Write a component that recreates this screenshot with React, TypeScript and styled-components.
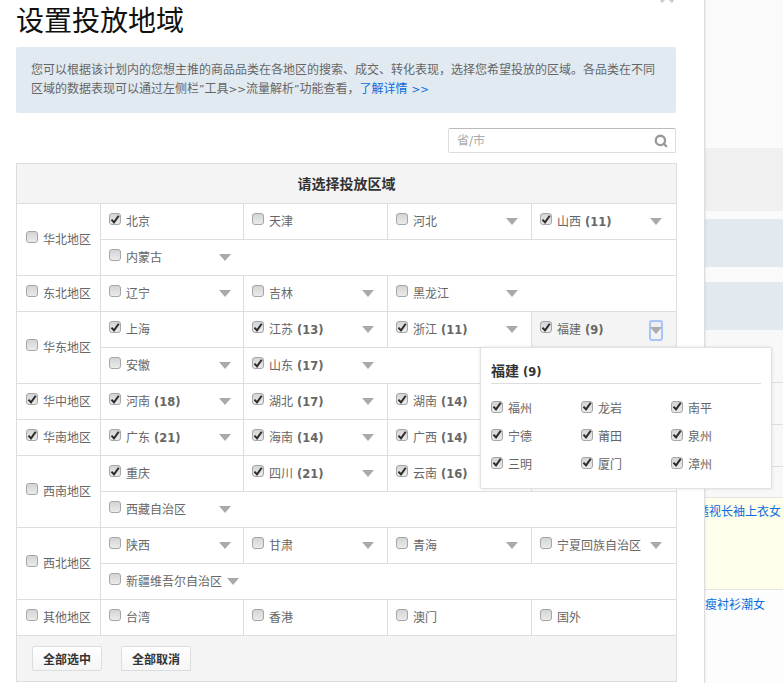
import React from "react";
import styled, { createGlobalStyle } from "styled-components";
import { Search } from "lucide-react";

const Global = createGlobalStyle`
  html, body { margin: 0; padding: 0; height: 683px; overflow: hidden; background: #fff; }
  body { font-family: "DejaVu Sans", "Noto Sans CJK SC", sans-serif; font-size: 12px; color: #666; }
  * { box-sizing: border-box; }
`;

const Page = styled.div`
  display: flex;
  width: 783px;
  height: 683px;
  overflow: hidden;
`;

const Modal = styled.main`
  position: relative;
  z-index: 1;
  flex: none;
  width: 705px;
  height: 683px;
  padding: 0 28px 0 16px;
  background: #fff;
  border-right: 1px solid #ddd;
  box-shadow: 1px 0 2px rgba(0, 0, 0, 0.06);
`;

const CloseIcon = styled.svg`
  position: absolute;
  top: -11px;
  left: 660px;
  width: 14px;
  height: 14px;
`;

const Title = styled.h1`
  margin: 0;
  height: 47px;
  font-family: "Noto Sans CJK SC", sans-serif;
  font-size: 28px;
  font-weight: 400;
  line-height: 39px;
  color: #111;
`;

const Notice = styled.div`
  height: 66px;
  margin-bottom: 15px;
  padding: 14px 15px;
  border-radius: 2px;
  background: #e2eaf1;
  line-height: 19px;
  color: #666;
  white-space: nowrap;
`;

const Latin = styled.span`
  font-size: 10.5px;
`;

const MoreLink = styled.a`
  color: #0a6cde;
  text-decoration: none;
`;

const SearchRow = styled.div`
  display: flex;
  justify-content: flex-end;
  margin-bottom: 10px;
`;

const SearchBox = styled.div`
  position: relative;
  width: 228px;
  height: 25px;
`;

const SearchInput = styled.input`
  display: block;
  width: 100%;
  height: 100%;
  padding: 0 28px 0 8px;
  border: 1px solid #ddd;
  border-top-color: #bbb;
  border-radius: 2px;
  background: #fff;
  font: inherit;
  &::placeholder { color: #aaa; opacity: 1; }
`;

const SearchGlyph = styled.span`
  position: absolute;
  top: 6px;
  right: 8px;
  display: flex;
  color: #999;
`;

const Table = styled.table`
  width: 660px;
  table-layout: fixed;
  border-collapse: collapse;
`;

const HeadCell = styled.th`
  height: 40px;
  padding: 0 0 2px;
  border: 1px solid #ddd;
  background: #f4f4f4;
  font-family: "Noto Sans CJK SC", sans-serif;
  font-size: 14px;
  font-weight: 700;
  color: #333;
`;

const RegionCell = styled.td`
  padding: 0 0 0 9px;
  border: 1px solid #ddd;
  white-space: nowrap;
`;

const Cell = styled.td<{ $active?: boolean }>`
  position: relative;
  height: 36px;
  padding: 0 0 0 8px;
  border: 1px solid #ddd;
  background: ${(p) => (p.$active ? "#f4f4f4" : "#fff")};
`;

const Item = styled.div<{ $wide?: boolean }>`
  display: inline-flex;
  align-items: center;
  min-width: ${(p) => (p.$wide ? "122px" : "0")};
  height: 34px;
  vertical-align: top;
`;

const CheckBox = styled.span`
  flex: none;
  display: flex;
  align-items: center;
  justify-content: center;
  width: 12px;
  height: 12px;
  margin: -5px 5px 0 0;
  border: 1px solid #a6a6a6;
  border-radius: 3px;
  background: linear-gradient(#d4d4d4, #ebebeb);
`;

const Name = styled.span`
  white-space: nowrap;
  line-height: 16px;
`;

const Count = styled.b`
  font-size: 11.5px;
  font-weight: 700;
`;

const Arrow = styled.span`
  flex: none;
  width: 0;
  height: 0;
  border-left: 6px solid transparent;
  border-right: 6px solid transparent;
  border-top: 7px solid #aaa;
`;

const ArrowSlot = styled.span`
  flex: none;
  display: flex;
  margin-left: auto;
  padding-left: 5px;
`;

const ActiveArrow = styled.span`
  position: absolute;
  top: 8px;
  left: 117px;
  display: flex;
  align-items: center;
  justify-content: center;
  width: 14px;
  height: 21px;
  border: 2px solid #a8c4f8;
  border-radius: 3px;
  background: linear-gradient(#eee, #f4f4f4);
`;

const FootCell = styled.td`
  height: 46px;
  padding: 0 0 0 15px;
  border: 1px solid #ddd;
  background: #f4f4f4;
`;

const FootButtons = styled.div`
  display: flex;
  gap: 19px;
`;

const FootButton = styled.button`
  width: 70px;
  height: 25px;
  padding: 0;
  border: 1px solid #ddd;
  border-radius: 2px;
  background: linear-gradient(#fff, #f5f5f5);
  font-family: "Noto Sans CJK SC", sans-serif;
  font-size: 12px;
  font-weight: 700;
  color: #333;
`;

const Popover = styled.div`
  position: absolute;
  z-index: 5;
  top: 35px;
  left: -52px;
  width: 292px;
  height: 142px;
  padding: 0 10px;
  border: 1px solid #e2e2e2;
  border-radius: 2px;
  background: #fff;
  box-shadow: 0 0 3px rgba(0, 0, 0, 0.12);
`;

const PopoverTitle = styled.div`
  height: 36px;
  border-bottom: 1px solid #ddd;
  font-size: 14px;
  font-weight: 700;
  line-height: 47px;
  white-space: nowrap;
  color: #333;
`;

const PopoverGrid = styled.div`
  display: grid;
  grid-template-columns: repeat(3, 90px);
  grid-auto-rows: 28px;
  padding-top: 11px;
`;

const PopoverItem = styled.div`
  display: flex;
  align-items: center;
`;

const Backdrop = styled.aside`
  flex: 1;
  min-width: 0;
  display: flex;
  flex-direction: column;
  background: #fafafa;
`;

const Band = styled.div<{ $h: number; $bg: string; $line?: boolean }>`
  flex: none;
  height: ${(p) => p.$h}px;
  background: ${(p) => p.$bg};
  border-top: ${(p) => (p.$line ? "1px solid #ddd" : "none")};
`;

const Cream = styled.div`
  flex: none;
  height: 93px;
  padding-top: 5px;
  border-top: 1px solid #e4e4e4;
  border-bottom: 1px solid #e4e4e4;
  background: #ffffeb;
`;

const Rest = styled.div`
  flex: 1;
  padding-top: 6px;
  background: #fdfdfd;
`;

const ProductLink = styled.a<{ $shift?: number }>`
  display: block;
  margin-left: ${(p) => p.$shift ?? 0}px;
  color: #0a6cde;
  line-height: 18px;
  white-space: nowrap;
`;

type Prov = { n: string; c?: boolean; k?: number; a?: boolean; span?: number; active?: boolean; empty?: boolean };
type Region = { name: string; c?: boolean; rows: Prov[][] };

const regions: Region[] = [
  { name: "华北地区", rows: [
    [{ n: "北京", c: true }, { n: "天津" }, { n: "河北", a: true }, { n: "山西", c: true, k: 11, a: true }],
    [{ n: "内蒙古", a: true, span: 4 }],
  ] },
  { name: "东北地区", rows: [
    [{ n: "辽宁", a: true }, { n: "吉林", a: true }, { n: "黑龙江", a: true, span: 2 }],
  ] },
  { name: "华东地区", rows: [
    [{ n: "上海", c: true }, { n: "江苏", c: true, k: 13, a: true }, { n: "浙江", c: true, k: 11, a: true }, { n: "福建", c: true, k: 9, active: true }],
    [{ n: "安徽", a: true }, { n: "山东", c: true, k: 17, a: true, span: 3 }],
  ] },
  { name: "华中地区", c: true, rows: [
    [{ n: "河南", c: true, k: 18, a: true }, { n: "湖北", c: true, k: 17, a: true }, { n: "湖南", c: true, k: 14, a: true }, { n: "", empty: true }],
  ] },
  { name: "华南地区", c: true, rows: [
    [{ n: "广东", c: true, k: 21, a: true }, { n: "海南", c: true, k: 14, a: true }, { n: "广西", c: true, k: 14, a: true }, { n: "", empty: true }],
  ] },
  { name: "西南地区", rows: [
    [{ n: "重庆", c: true }, { n: "四川", c: true, k: 21, a: true }, { n: "云南", c: true, k: 16, a: true }, { n: "", empty: true }],
    [{ n: "西藏自治区", a: true, span: 4 }],
  ] },
  { name: "西北地区", rows: [
    [{ n: "陕西", a: true }, { n: "甘肃", a: true }, { n: "青海", a: true }, { n: "宁夏回族自治区", a: true }],
    [{ n: "新疆维吾尔自治区", a: true, span: 4 }],
  ] },
  { name: "其他地区", rows: [
    [{ n: "台湾" }, { n: "香港" }, { n: "澳门" }, { n: "国外" }],
  ] },
];

const fujian = ["福州", "龙岩", "南平", "宁德", "莆田", "泉州", "三明", "厦门", "漳州"];

const Check = ({ on }: { on?: boolean }) => (
  <CheckBox>
    {on && (
      <svg width="11" height="11" viewBox="0 0 11 11">
        <path d="M1.6 5.6 L4.4 8.6 L9.6 1.4" fill="none" stroke="#2c2c2c" strokeWidth="2.2" />
      </svg>
    )}
  </CheckBox>
);

const ProvCell = ({ p }: { p: Prov }) => {
  if (p.empty) return <Cell />;
  return (
    <Cell colSpan={p.span} $active={p.active}>
      <Item $wide={p.a}>
        <Check on={p.c} />
        <Name>
          {p.n}
          {p.k !== undefined && <Count> ({p.k})</Count>}
        </Name>
        {p.a && (
          <ArrowSlot>
            <Arrow />
          </ArrowSlot>
        )}
      </Item>
      {p.active && (
        <>
          <ActiveArrow>
            <Arrow />
          </ActiveArrow>
          <Popover>
            <PopoverTitle>福建<Count> (9)</Count></PopoverTitle>
            <PopoverGrid>
              {fujian.map((c) => (
                <PopoverItem key={c}>
                  <Check on />
                  <Name>{c}</Name>
                </PopoverItem>
              ))}
            </PopoverGrid>
          </Popover>
        </>
      )}
    </Cell>
  );
};

export default function App() {
  return (
    <Page>
      <Global />
      <Modal>
        <CloseIcon viewBox="0 0 14 14">
          <path d="M1 1 L13 13 M13 1 L1 13" stroke="#ccc" strokeWidth="3" />
        </CloseIcon>
        <Title>设置投放地域</Title>
        <Notice>
          您可以根据该计划内的您想主推的商品品类在各地区的搜索、成交、转化表现，选择您希望投放的区域。各品类在不同
          <br />
          区域的数据表现可以通过左侧栏<Latin>”</Latin>工具<Latin>&gt;&gt;</Latin>流量解析<Latin>”</Latin>功能查看，
          <MoreLink href="#">了解详情 <Latin>&gt;&gt;</Latin></MoreLink>
        </Notice>
        <SearchRow>
          <SearchBox>
            <SearchInput placeholder="省/市" />
            <SearchGlyph>
              <Search size={14} strokeWidth={4} />
            </SearchGlyph>
          </SearchBox>
        </SearchRow>
        <Table>
          <colgroup>
            <col width={84} />
            <col width={143} />
            <col width={144} />
            <col width={144} />
            <col width={145} />
          </colgroup>
          <thead>
            <tr>
              <HeadCell colSpan={5}>请选择投放区域</HeadCell>
            </tr>
          </thead>
          <tbody>
            {regions.map((r) =>
              r.rows.map((row, i) => (
                <tr key={r.name + i}>
                  {i === 0 && (
                    <RegionCell rowSpan={r.rows.length}>
                      <Item>
                        <Check on={r.c} />
                        <Name>{r.name}</Name>
                      </Item>
                    </RegionCell>
                  )}
                  {row.map((p, j) => (
                    <ProvCell key={j} p={p} />
                  ))}
                </tr>
              ))
            )}
          </tbody>
          <tfoot>
            <tr>
              <FootCell colSpan={5}>
                <FootButtons>
                  <FootButton>全部选中</FootButton>
                  <FootButton>全部取消</FootButton>
                </FootButtons>
              </FootCell>
            </tr>
          </tfoot>
        </Table>
      </Modal>
      <Backdrop>
        <Band $h={148} $bg="#fafafa" />
        <Band $h={63} $bg="#f0f0f0" />
        <Band $h={8} $bg="#fafafa" />
        <Band $h={48} $bg="#e2eaf0" />
        <Band $h={15} $bg="#fafafa" />
        <Band $h={48} $bg="#e2eaf0" />
        <Band $h={52} $bg="#f8f8f8" />
        <Band $h={42} $bg="#f8f8f8" $line />
        <Band $h={42} $bg="#f8f8f8" $line />
        <Band $h={31} $bg="#f8f8f8" $line />
        <Cream>
          <ProductLink $shift={-8}>透视长袖上衣女</ProductLink>
        </Cream>
        <Rest>
          <ProductLink>瘦衬衫潮女</ProductLink>
        </Rest>
      </Backdrop>
    </Page>
  );
}
